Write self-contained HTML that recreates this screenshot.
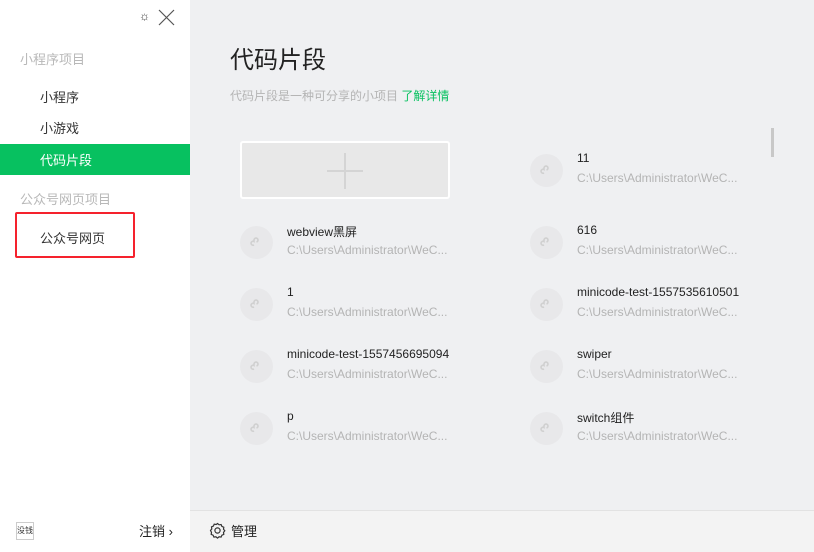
<!DOCTYPE html>
<html><head><meta charset="utf-8"><style>
*{margin:0;padding:0;box-sizing:border-box}
body{width:814px;height:552px;overflow:hidden;font-family:"Liberation Sans","Noto Sans CJK SC",sans-serif;background:#eff0f2;position:relative}
.side{position:absolute;left:0;top:0;width:190px;height:552px;background:#fff}
.a{position:absolute;white-space:nowrap}
.lbl{font-size:13px;color:#b8b8b8}
.it{font-size:13px;color:#333}
.ic{position:absolute;width:33px;height:33px;border-radius:50%;background:#e8e8ea}
.ic svg{position:absolute;left:9px;top:9px}
.nm{font-size:12px;color:#222}
.pt{font-size:12px;color:#b4b4b4}
</style></head><body>
<div class="side">
 <div class="a" style="left:139px;top:9px;font-size:12px;color:#333">&#9788;</div>
 <svg class="a" style="left:158px;top:9px" width="17" height="17"><path d="M1 1L16 16M16 1L1 16" stroke="#555" stroke-width="1.2"/></svg>
 <div class="a lbl" style="left:20px;top:49px">小程序项目</div>
 <div class="a it" style="left:40px;top:87px">小程序</div>
 <div class="a it" style="left:40px;top:118px">小游戏</div>
 <div class="a" style="left:0;top:144px;width:190px;height:31px;background:#07c160"></div>
 <div class="a" style="left:40px;top:150px;font-size:13px;color:#fff">代码片段</div>
 <div class="a lbl" style="left:20px;top:189px">公众号网页项目</div>
 <div class="a" style="left:15px;top:212px;width:120px;height:46px;border:2px solid #f5222d;border-radius:2px"></div>
 <div class="a it" style="left:40px;top:228px">公众号网页</div>
 <div class="a" style="left:16px;top:522px;width:18px;height:18px;border:1px solid #ccc;font-size:8px;line-height:16px;color:#333;text-align:center">没钱</div>
 <div class="a" style="left:139px;top:521px;font-size:13px;color:#222">注销 ›</div>
</div>
<div class="a" style="left:230px;top:40px;font-size:24px;color:#222">代码片段</div>
<div class="a" style="left:230px;top:87px;font-size:12px;color:#b4b4b4">代码片段是一种可分享的小项目 <span style="color:#07c160">了解详情</span></div>
<div class="a" style="left:771px;top:128px;width:3px;height:29px;background:#c8c8c8"></div>
<div class="a" style="left:240px;top:141px;width:210px;height:58px;background:#e8e8e8;border:2px solid #fff;border-radius:3px"></div>
<svg class="a" style="left:327px;top:153px" width="36" height="36"><path d="M18 0V36M0 18H36" stroke="#d4d4d4" stroke-width="2"/></svg>

<div id="cards"></div>
<div class="a" style="left:190px;top:510px;width:624px;height:42px;background:#f3f3f3;border-top:1px solid #e2e2e2"></div>
<svg class="a" style="left:209px;top:522px" width="17" height="17" viewBox="0 0 17 17"><path d="M8.5 1.5l1.6 1.3 2-.3.8 1.9 1.9.8-.3 2 1.3 1.6-1.3 1.6.3 2-1.9.8-.8 1.9-2-.3-1.6 1.3-1.6-1.3-2 .3-.8-1.9-1.9-.8.3-2L1.5 8.5l1.3-1.6-.3-2 1.9-.8.8-1.9 2 .3z" fill="none" stroke="#333" stroke-width="1.2"/><circle cx="8.5" cy="8.5" r="2.6" fill="none" stroke="#333" stroke-width="1.2"/></svg>
<div class="a" style="left:231px;top:521px;font-size:13px;color:#222">管理</div>
<script>
var d=[[530,154,"11"],[240,226,"webview黑屏"],[530,226,"616"],[240,288,"1"],[530,288,"minicode-test-1557535610501"],[240,350,"minicode-test-1557456695094"],[530,350,"swiper"],[240,412,"p"],[530,412,"switch组件"]];
var h="";d.forEach(function(c){var x=c[0],y=c[1];
h+='<div class="ic" style="left:'+x+'px;top:'+y+'px"><svg width="15" height="15"><path d="M5 10a2 2 0 1 1 0-3.5V5a2 2 0 1 1 2.5 2" fill="none" stroke="#d0d0d0" stroke-width="1.6"/></svg></div>';
h+='<div class="a nm" style="left:'+(x+47)+'px;top:'+(y-3)+'px">'+c[2]+'</div>';
h+='<div class="a pt" style="left:'+(x+47)+'px;top:'+(y+17)+'px">C:\\Users\\Administrator\\WeC...</div>';});
document.getElementById("cards").innerHTML=h;
</script>
</body></html>
